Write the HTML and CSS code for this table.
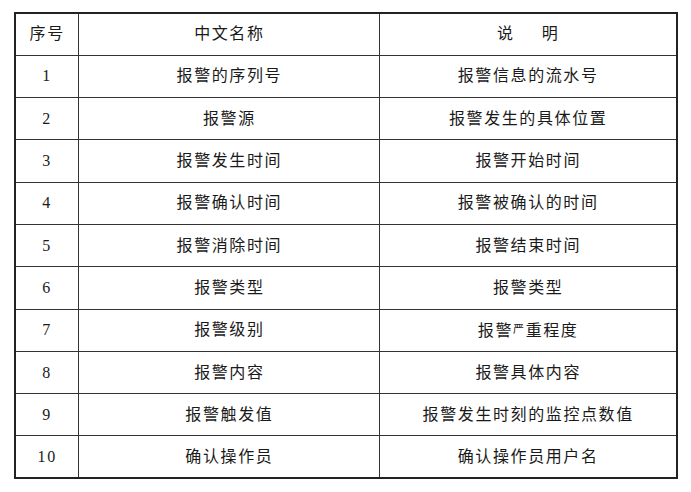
FILE: index.html
```html
<!DOCTYPE html>
<html lang="zh-CN">
<head>
<meta charset="utf-8">
<title>报警信息</title>
<link rel="stylesheet" href="styles.css">
</head>
<body>
<div class="page">
<table class="grid">
  <colgroup>
    <col class="c-no">
    <col class="c-name">
    <col class="c-desc">
  </colgroup>
  <thead>
    <tr>
      <th class="no-head">序号</th>
      <th>中文名称</th>
      <th class="desc-head">说&emsp;&ensp;明</th>
    </tr>
  </thead>
  <tbody>
    <tr><td class="num">1</td><td>报警的序列号</td><td class="wide">报警信息的流水号</td></tr>
    <tr><td class="num">2</td><td>报警源</td><td>报警发生的具体位置</td></tr>
    <tr><td class="num">3</td><td>报警发生时间</td><td>报警开始时间</td></tr>
    <tr><td class="num">4</td><td>报警确认时间</td><td>报警被确认的时间</td></tr>
    <tr><td class="num">5</td><td>报警消除时间</td><td>报警结束时间</td></tr>
    <tr><td class="num">6</td><td>报警类型</td><td>报警类型</td></tr>
    <tr><td class="num">7</td><td>报警级别</td><td>报警<span class="small">严</span>重程度</td></tr>
    <tr><td class="num">8</td><td>报警内容</td><td>报警具体内容</td></tr>
    <tr><td class="num">9</td><td>报警触发值</td><td class="wide2">报警发生时刻的监控点数值</td></tr>
    <tr><td class="num">10</td><td>确认操作员</td><td>确认操作员用户名</td></tr>
  </tbody>
</table>
<p class="caption">注　报警信息应包括上述数据项</p>
</div>
</body>
</html>
```

FILE: styles.css
```css
html, body {
  margin: 0;
  padding: 0;
  background: #ffffff;
  overflow: hidden;
}

.page {
  width: 691px;
  height: 492px;
  padding: 12px 0 0 14px;
  box-sizing: border-box;
  overflow: hidden;
}

.grid {
  border-collapse: collapse;
  width: 664px;
  border: 2px solid #222;
  font-family: "Liberation Serif", "Noto Sans CJK SC", serif;
  font-size: 16px;
  color: #1a1a1a;
}

.c-no { width: 64px; }
.c-name { width: 302px; }
.c-desc { width: 298px; }

.grid tr {
  height: 42.3px;
}

.grid th,
.grid td {
  border: 1px solid #333;
  padding: 0;
  text-align: center;
  vertical-align: middle;
  font-weight: normal;
  letter-spacing: 1.6px;
  line-height: 20px;
}

.no-head {
  letter-spacing: 0;
}

.desc-head {
  letter-spacing: 0;
}

.num {
  font-family: "Liberation Serif", serif;
  font-size: 16px;
  letter-spacing: 0;
}

.wide {
  letter-spacing: 4px;
}

.wide2 {
  letter-spacing: 3.6px;
}

.small {
  font-size: 11px;
  vertical-align: 3px;
}

.caption {
  margin: 11px 0 0 86px;
  font-family: "Noto Sans CJK SC", sans-serif;
  font-size: 16px;
  line-height: 20px;
  color: #a0a0a0;
  letter-spacing: 6px;
}
```
